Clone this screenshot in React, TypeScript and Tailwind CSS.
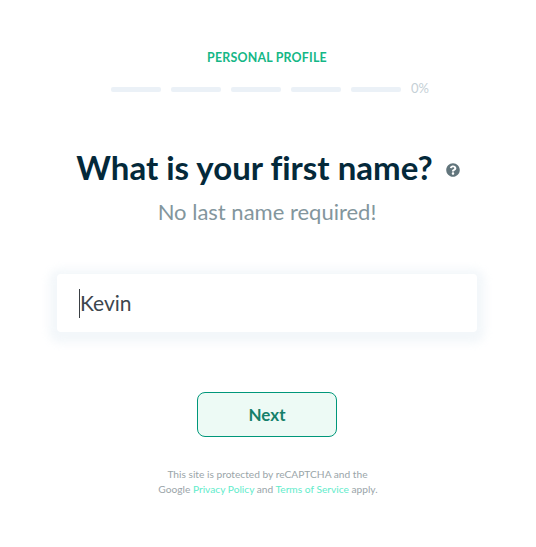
import { FaQuestionCircle } from "react-icons/fa";

function Progress() {
  return (
    <div className="mt-[13px] flex h-[20px] items-center pl-[111px]">
      {[0, 1, 2, 3, 4].map((i) => (
        <div key={i} className="mr-[10px] h-[5px] w-[50px] rounded-[2px] bg-[#ebf1f7]" />
      ))}
      <span className="text-[13px] text-[#c5d0d6]">0%</span>
    </div>
  );
}

export default function App() {
  return (
    <div className="flex h-[547px] w-[536px] flex-col bg-white font-['Lato',sans-serif] [font-variant-ligatures:none]">
      <p className="mt-[50px] pr-[2px] text-center text-[12.4px] leading-[16px] font-bold tracking-[0.2px] text-[#14b786]">
        PERSONAL PROFILE
      </p>
      <Progress />

      <div className="mt-[46px] flex h-[44px] items-center justify-center">
        <h1 className="text-[33px] leading-[44px] font-bold text-[#04293a]">What is your first name?</h1>
        <FaQuestionCircle className="mt-[5px] ml-[13px] text-[14px] text-[#62757c]" />
      </div>
      <p className="mt-[8px] pr-[2px] text-center text-[22px] leading-[30px] text-[#83969d]">No last name required!</p>

      <div className="mt-[47px] ml-[57px] flex h-[58px] w-[420px] items-center rounded-[4px] bg-white pl-[22px] shadow-[0_3px_8px_8px_rgba(226,235,243,0.4)]">
        <div className="h-[29px] w-px bg-[#3a3f44]" />
        <span className="text-[21px] text-[#3d464d]">Kevin</span>
      </div>

      <button className="mt-[60px] ml-[197px] h-[45px] w-[140px] rounded-[8px] border border-[#00977a] bg-[#edfaf5] text-[17px] font-bold text-[#15806a]">
        Next
      </button>

      <div className="mt-[30px] text-center text-[10.2px] leading-[15px] text-[#9aa5a9]">
        <p className="pr-[1px]">This site is protected by reCAPTCHA and the</p>
        <p>
          Google <a className="text-[#62eccb]">Privacy Policy</a> and{" "}
          <a className="text-[#62eccb]">Terms of Service</a> apply.
        </p>
      </div>
    </div>
  );
}
